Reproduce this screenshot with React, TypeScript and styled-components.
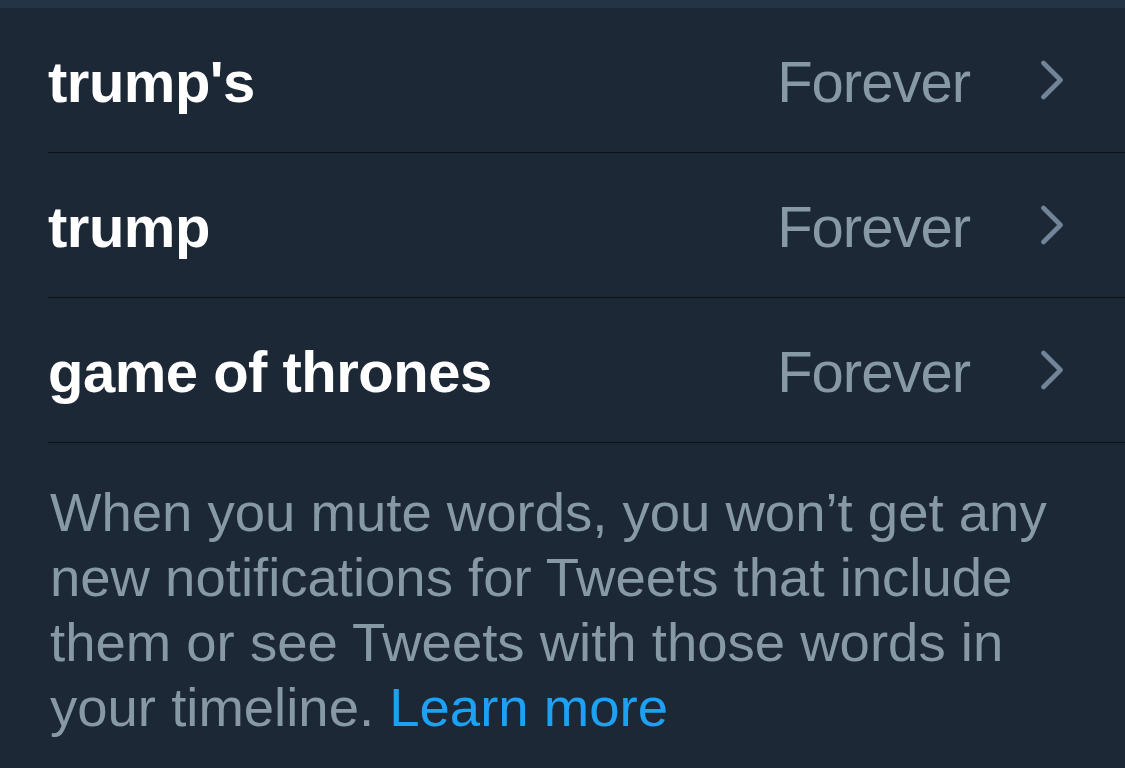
import React from "react";
import styled, { createGlobalStyle } from "styled-components";

const GlobalStyle = createGlobalStyle`
  html, body {
    margin: 0;
    padding: 0;
    background: #1c2836;
  }
  body {
    font-family: "Liberation Sans", Arial, sans-serif;
    -webkit-font-smoothing: antialiased;
  }
`;

const Page = styled.div`
  width: 1125px;
  height: 768px;
  overflow: hidden;
  background: #1c2836;
  display: flex;
  flex-direction: column;
`;

const TopStrip = styled.div`
  height: 8px;
  background: #243447;
  flex: none;
`;

const List = styled.div`
  display: flex;
  flex-direction: column;
`;

const Row = styled.div`
  height: 144px;
  margin-left: 48px;
  padding-right: 61px;
  border-bottom: 1px solid #0c1218;
  display: flex;
  align-items: center;
  flex: none;
`;

const Word = styled.span`
  flex: 1;
  color: #ffffff;
  font-weight: 700;
  font-size: 58px;
  letter-spacing: -0.5px;
  padding-top: 2px;
`;

const Duration = styled.span`
  color: #8899a6;
  font-size: 58px;
  letter-spacing: -1px;
  margin-right: 70px;
  padding-top: 2px;
`;

const Chevron = styled.svg`
  width: 24px;
  height: 40px;
  flex: none;
`;

const Footer = styled.p`
  margin: 0;
  padding: 37px 40px 0 50px;
  color: #8899a6;
  font-size: 54.5px;
  line-height: 65px;
`;

const Link = styled.a`
  color: #1da1f2;
  text-decoration: none;
`;

const words = ["trump's", "trump", "game of thrones"];

export default function App() {
  return (
    <>
      <GlobalStyle />
      <Page>
        <TopStrip />
        <List>
          {words.map((w) => (
            <Row key={w}>
              <Word>{w}</Word>
              <Duration>Forever</Duration>
              <Chevron viewBox="0 0 24 40">
                <path
                  d="M3.5 3 L20.5 20 L3.5 37"
                  fill="none"
                  stroke="#73849a"
                  strokeWidth="4.6"
                  strokeLinecap="round"
                  strokeLinejoin="round"
                />
              </Chevron>
            </Row>
          ))}
        </List>
        <Footer>
          When you mute words, you won’t get any
          <br />
          new notifications for Tweets that include
          <br />
          them or see Tweets with those words in
          <br />
          your timeline. <Link href="#">Learn more</Link>
        </Footer>
      </Page>
    </>
  );
}
